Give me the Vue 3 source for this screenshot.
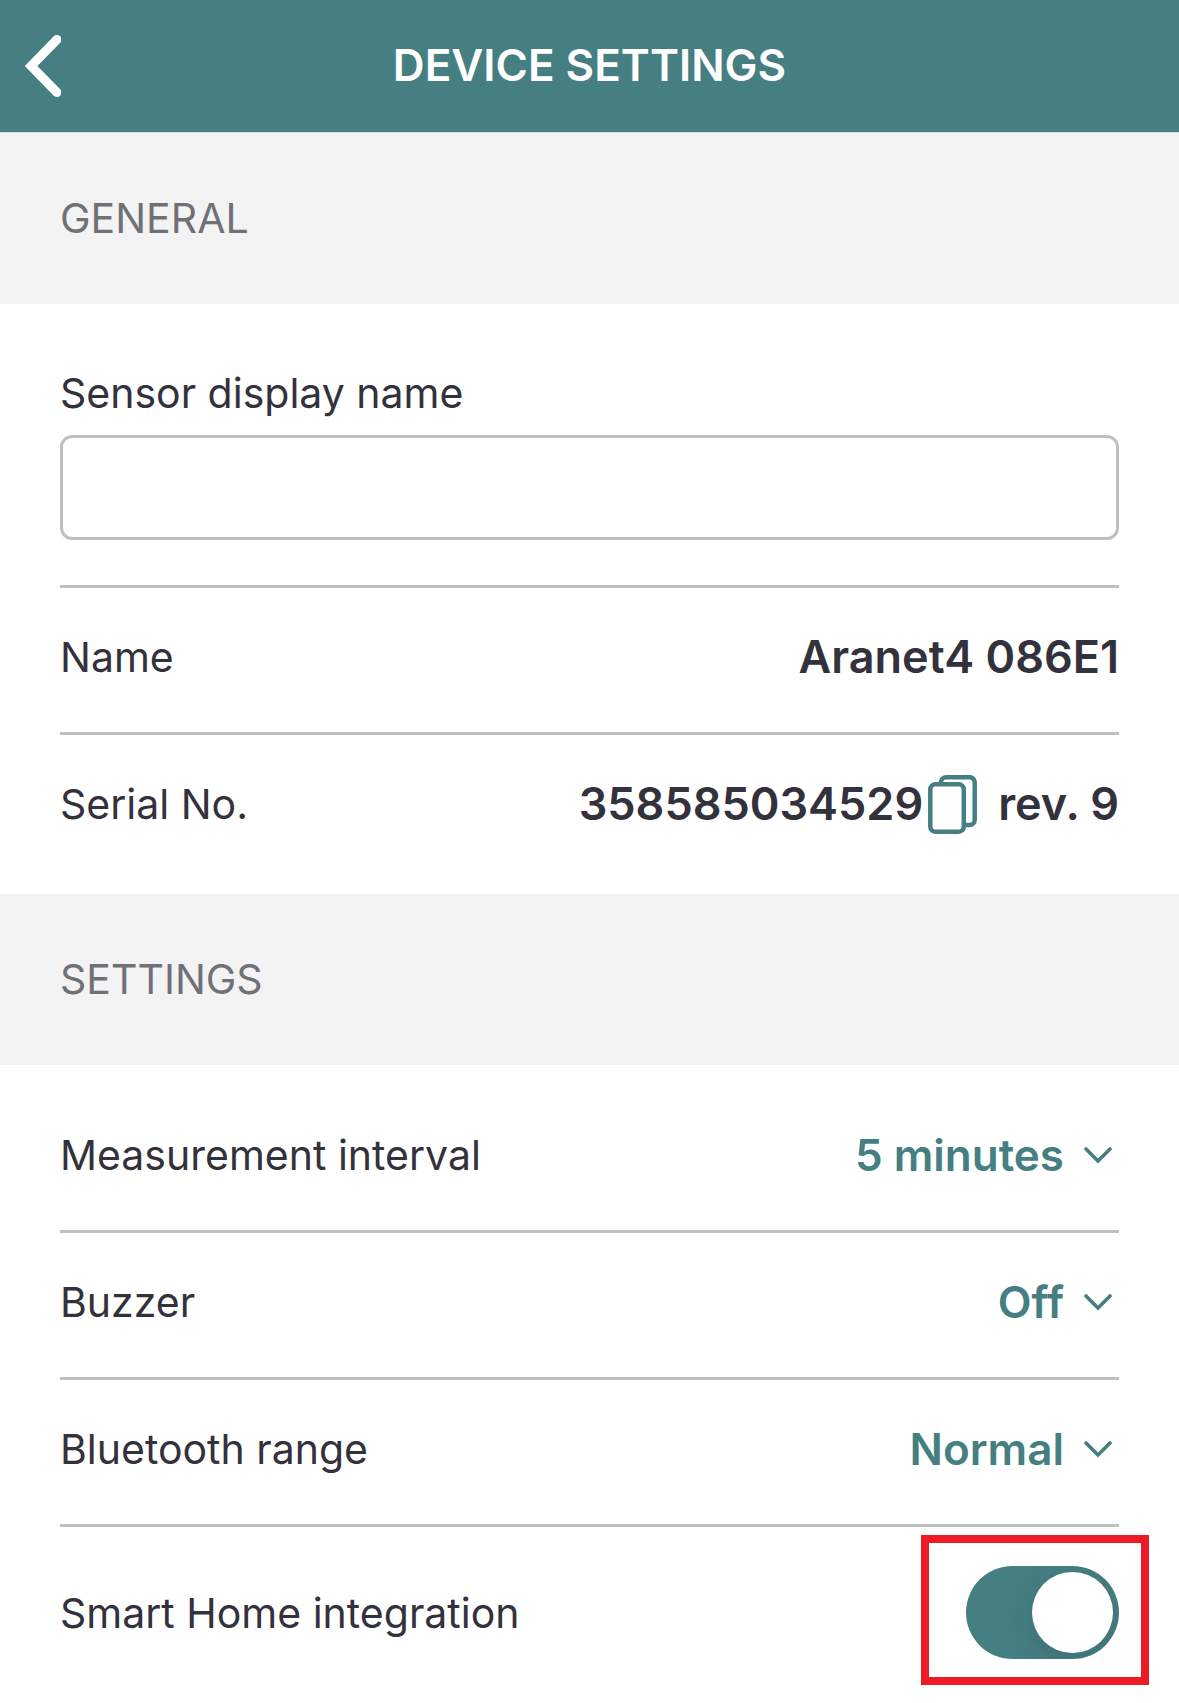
<script setup>
import { reactive, ref } from 'vue'

const displayName = ref('')
const smartHome = ref(true)

const selects = reactive([
  { id: 'interval', label: 'Measurement interval', value: '5 minutes', options: ['1 minute', '2 minutes', '5 minutes', '10 minutes'] },
  { id: 'buzzer', label: 'Buzzer', value: 'Off', options: ['Off', 'Once', 'Each time'] },
  { id: 'range', label: 'Bluetooth range', value: 'Normal', options: ['Normal', 'Extended'] },
])
</script>

<template>
  <div class="screen">
    <header class="topbar">
      <button class="back" type="button" aria-label="Back">
        <svg width="36" height="62" viewBox="0 0 36 62" fill="none" stroke="#fff" stroke-width="9" stroke-linecap="round" aria-hidden="true">
          <path d="M32 4.500 6 31l26 26.500" />
        </svg>
      </button>
      <h1>DEVICE SETTINGS</h1>
    </header>

    <main>
      <h2 class="band">GENERAL</h2>
      <section class="group">
        <div class="field">
          <label for="display-name">Sensor display name</label>
          <input id="display-name" v-model="displayName" type="text" />
        </div>
        <div class="row">
          <span>Name</span>
          <span class="value">Aranet4 086E1</span>
        </div>
        <div class="row">
          <span>Serial No.</span>
          <span class="value serial">
            <span>358585034529</span>
            <button class="copy" type="button" aria-label="Copy serial number">
              <svg width="49" height="59" viewBox="0 0 49 59" fill="none" stroke="currentColor" stroke-width="4.500" aria-hidden="true">
                <path d="M13 9V7a5 5 0 0 1 5-4.700h24a5 5 0 0 1 4.700 4.700v38a5 5 0 0 1-4.700 5h-6" />
                <rect x="2.300" y="9.300" width="33.500" height="47.400" rx="5" />
              </svg>
            </button>
            <span>rev. 9</span>
          </span>
        </div>
      </section>

      <h2 class="band">SETTINGS</h2>
      <section class="group settings">
        <div v-for="item in selects" :key="item.id" class="row">
          <label :for="item.id">{{ item.label }}</label>
          <span class="picker">
            <select :id="item.id" v-model="item.value">
              <option v-for="option in item.options" :key="option">{{ option }}</option>
            </select>
            <svg class="chevron" width="28" height="17" viewBox="0 0 28 17" fill="none" stroke="currentColor" stroke-width="3.600" stroke-linecap="round" aria-hidden="true">
              <path d="m2 2 12 12L26 2" />
            </svg>
          </span>
        </div>
        <div class="row toggle-row">
          <label for="smart-home">Smart Home integration</label>
          <span class="toggle">
            <input id="smart-home" v-model="smartHome" type="checkbox" role="switch" />
          </span>
        </div>
      </section>
    </main>
  </div>
</template>

<style>
body {
  margin: 0;
  background: #fff;
}
</style>

<style scoped>
.screen {
  --teal: #457f82;
  --line: #c0c0c0;
  color: #33313c;
  font-family: Inter, "Liberation Sans", sans-serif;
  font-size: 41px;
  line-height: 50px;
}

.topbar {
  display: grid;
  grid-template-columns: 86px 1fr 86px;
  align-items: center;
  height: 132px;
  border-bottom: 1px solid #d3e0e1;
  background: var(--teal);
  color: #fff;
}

.topbar h1 {
  margin: 0;
  padding-bottom: 2px;
  font-size: 44px;
  font-weight: 600;
  text-align: center;
}

button {
  display: flex;
  padding: 0;
  border: 0;
  background: none;
  color: var(--teal);
  cursor: pointer;
}

.back {
  padding-left: 25px;
}

.band {
  margin: 0;
  padding: 60px 60px 61px;
  background: #f3f3f3;
  color: #717077;
  font-size: 41px;
  font-weight: 400;
}

.group {
  padding: 0 60px 15px;
}

.settings {
  padding-top: 21px;
}

.field {
  display: flex;
  flex-direction: column;
  gap: 17px;
  padding: 64px 0 45px;
}

.field input {
  box-sizing: border-box;
  width: 100%;
  height: 105px;
  padding: 0 24px;
  border: 3px solid var(--line);
  border-radius: 12px;
  background: #fff;
  color: inherit;
  font: inherit;
}

.row {
  display: flex;
  align-items: center;
  justify-content: space-between;
  min-height: 138px;
  padding-bottom: 6px;
}

.row + .row,
.field + .row {
  border-top: 3px solid var(--line);
}

.value {
  font-size: 45px;
  font-weight: 600;
}

.serial {
  display: flex;
  align-items: center;
}

.copy {
  margin: 0 21px 0 5px;
}

.picker {
  position: relative;
  display: flex;
  align-items: center;
  color: var(--teal);
}

.picker select {
  appearance: none;
  padding: 0 55px 0 0;
  border: 0;
  background: none;
  color: inherit;
  font-family: inherit;
  font-size: 44px;
  font-weight: 600;
  line-height: 56px;
  text-align-last: right;
  cursor: pointer;
}

.chevron {
  position: absolute;
  right: 7px;
  pointer-events: none;
}

.toggle-row {
  min-height: 171px;
  padding-bottom: 0;
}

.toggle {
  position: relative;
  display: flex;
}

/* Highlight frame around the switch */
.toggle::after {
  content: "";
  position: absolute;
  inset: -31px -30px -26px -45px;
  border: 8px solid #ed1c24;
  pointer-events: none;
}

.toggle input {
  appearance: none;
  display: flex;
  box-sizing: border-box;
  width: 153px;
  height: 93px;
  margin: 0;
  padding: 6px;
  overflow: hidden;
  border-radius: 47px;
  background: #c0c0c0;
  cursor: pointer;
}

.toggle input::before {
  content: "";
  width: 81px;
  height: 81px;
  border-radius: 50%;
  background: #fff;
  box-shadow: 0 8px 24px rgba(40, 50, 60, 0.2);
}

.toggle input:checked {
  justify-content: flex-end;
  background: var(--teal);
}
</style>
